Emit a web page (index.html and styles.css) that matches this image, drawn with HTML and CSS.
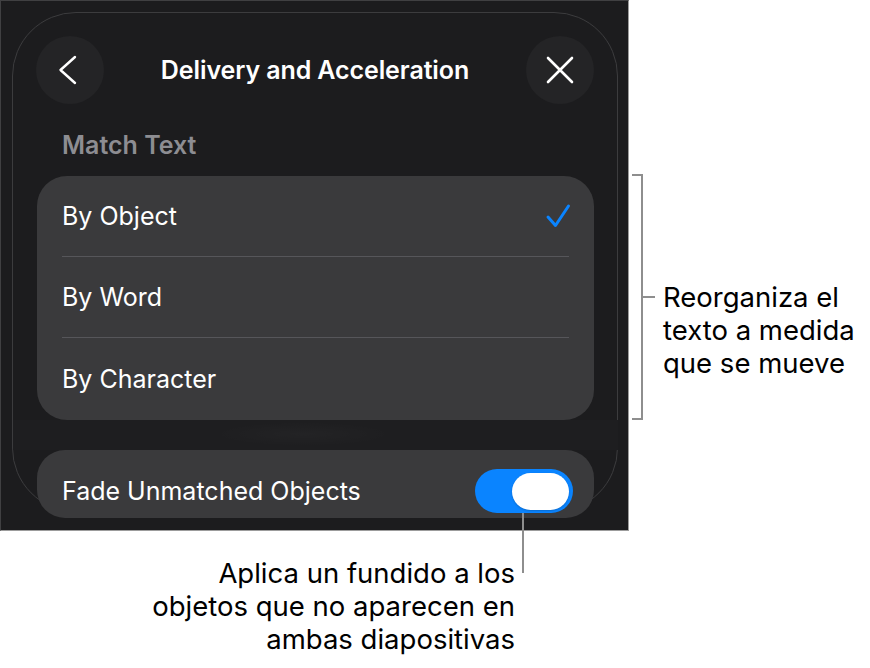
FILE: index.html
```html
<!DOCTYPE html>
<html>
<head>
	<title>Delivery and Acceleration</title>
	<meta charset="UTF-8">
	<link rel="stylesheet" href="styles.css">
</head>
<body>
<div class="page">
	<div class="top">
		<div class="panel">
			<div class="sheet">
				<div class="sheet-head">
					<span class="round-btn">
						<svg width="68" height="68" viewBox="0 0 68 68"><path d="M39 21 L24.5 34 L39 47" fill="none" stroke="#fff" stroke-width="2.4" stroke-linecap="round" stroke-linejoin="round"/></svg>
					</span>
					<div class="sheet-title">Delivery and Acceleration</div>
					<span class="round-btn">
						<svg width="68" height="68" viewBox="0 0 68 68"><path d="M22 22 L46 46 M46 22 L22 46" fill="none" stroke="#fff" stroke-width="2.6" stroke-linecap="round"/></svg>
					</span>
				</div>
				<div class="section-label">Match Text</div>
				<div class="group">
					<div class="option">
						<span>By Object</span>
						<svg width="28" height="28" viewBox="0 0 28 28"><path d="M4 15 L11.5 23.5 L24.5 4" fill="none" stroke="#0a84ff" stroke-width="3" stroke-linecap="round" stroke-linejoin="round"/></svg>
					</div>
					<div class="option"><span>By Word</span></div>
					<div class="option"><span>By Character</span></div>
				</div>
				<div class="ghost"></div>
				<div class="group switch-row">
					<span>Fade Unmatched Objects</span>
					<span class="switch"><span class="knob"></span></span>
				</div>
			</div>
		</div>
		<div class="note-right">
			<div class="bracket"></div>
			<div class="tick"></div>
			<p class="note">Reorganiza el<br>texto a medida<br>que se mueve</p>
		</div>
	</div>
	<p class="note note-bottom">Aplica un fundido a los<br>objetos que no aparecen en<br>ambas diapositivas</p>
	<div class="leader"></div>
</div>
</body>
</html>
```

FILE: styles.css
```css
body { margin: 0; background: #fff; font-family: Inter, "Noto Sans", sans-serif; }
.page { position: relative; width: 870px; height: 668px; }
.top { display: flex; align-items: flex-start; }

.panel { width: 629px; height: 531px; box-sizing: border-box; background: #1c1c1e; border-top: 1px solid #404042; border-left: 1px solid #404042; border-right: 1px solid #9c9c9c; border-bottom: 1px solid #9c9c9c; overflow: hidden; }
.sheet { margin: 11px 0 0 11px; width: 606px; height: 500px; box-sizing: border-box; border: 1px solid #3c3c3e; border-radius: 64px; padding: 23px 23px 0 24px; }

.sheet-head { display: flex; align-items: center; justify-content: space-between; height: 68px; margin-left: -1px; }
.round-btn { width: 68px; height: 68px; border-radius: 50%; background: #242426; display: block; }
.round-btn svg { display: block; }
.sheet-title { color: #fff; font-size: 25px; font-weight: 600; letter-spacing: -0.1px; }

.section-label { margin-top: 27px; padding-left: 25px; line-height: 28px; font-size: 25px; font-weight: 600; color: #8d8d92; }

.group { background: #3a3a3c; border-radius: 30px; }
.section-label + .group { margin-top: 17px; }
.option { margin: 0 25px; height: 80px; border-bottom: 1px solid #56565a; display: flex; align-items: center; justify-content: space-between; color: #fff; font-size: 25px; }
.option:last-child { border-bottom: none; height: 82px; }
.option svg { display: block; margin-right: -3px; }

.ghost { height: 30px; background: radial-gradient(ellipse 90px 12px at 290px 14px, rgba(255,255,255,0.025), rgba(255,255,255,0) 100%), #1e1e20; margin: 0 -24px 0 -24px; }

.switch-row { height: 68px; box-sizing: border-box; border-radius: 28px; display: flex; align-items: flex-start; justify-content: space-between; padding: 19px 21px 0 25px; color: #fff; font-size: 25px; line-height: 44px; }
.switch { width: 98px; height: 44px; border-radius: 22px; background: #0a84ff; display: flex; align-items: center; justify-content: flex-end; padding: 0 4px; box-sizing: border-box; }
.knob { width: 57px; height: 37px; border-radius: 19px; background: #fff; box-shadow: 0 1px 2px rgba(0,0,0,0.2); }

.note { margin: 0; color: #000; font-size: 27.5px; line-height: 33px; }
.note-right { display: flex; align-items: flex-start; margin-left: 3px; margin-top: 174px; }
.bracket { width: 9px; height: 242px; border: 2px solid #8e8e8e; border-left: none; }
.tick { width: 12px; height: 2px; background: #8e8e8e; margin-top: 122px; }
.note-right .note { margin-left: 8px; margin-top: 107px; }

.note-bottom { width: 515px; text-align: right; margin-top: 26px; }
.leader { position: absolute; left: 522px; top: 513px; width: 2px; height: 60px; background: #8e8e8e; }
```
